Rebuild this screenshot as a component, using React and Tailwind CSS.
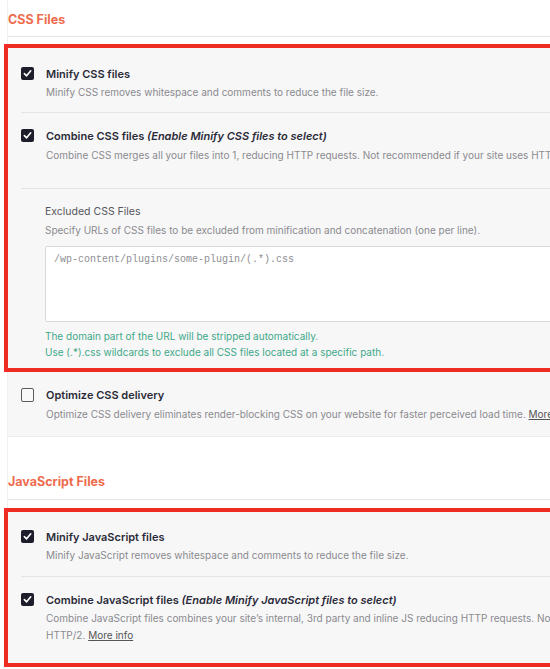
import React from "react";

const font = { fontFamily: "Inter, 'Noto Sans', sans-serif" };

function CheckBox({ checked }) {
  if (checked) {
    return (
      <div className="w-[13px] h-[13px] shrink-0 rounded-[2px] bg-[#1d1d2c] flex items-center justify-center">
        <svg width="9" height="9" viewBox="0 0 10 10" fill="none">
          <path d="M1.5 5.2 L4 7.6 L8.6 2" stroke="white" strokeWidth="1.8" strokeLinecap="round" strokeLinejoin="round" />
        </svg>
      </div>
    );
  }
  return <div className="w-[13px] h-[14px] shrink-0 rounded-[2px] border-[1.5px] border-[#5a5a60] bg-[#f9f9f9]" />;
}

function Row({ checked, title, hint, children, className }) {
  return (
    <div className={"flex gap-[12px] pl-[13px] " + className}>
      <CheckBox checked={checked} />
      <div className="w-[660px]">
        <div className="text-[11px] leading-[14px] font-semibold text-[#2b2b38]">
          {title}
          {hint && <i className="font-semibold"> {hint}</i>}
        </div>
        {children}
      </div>
    </div>
  );
}

function Divider() {
  return <div className="ml-[13px] h-px bg-[#e4e4e6]" />;
}

export default function App() {
  return (
    <div className="w-[550px] h-[669px] overflow-hidden bg-white" style={font}>
      <div className="w-[760px] ml-[7px] border-l border-[#efefef]">
        <div className="h-[37px] flex items-end pb-[8px] border-b border-[#e6e6e6] text-[12.5px] leading-[16px] font-bold text-[#ee6c4e]">
          CSS Files
        </div>
        <div className="mt-[7px] -ml-[4px] border-4 border-[#ee2c24] bg-[#f7f7f8]">
          <Row checked title="Minify CSS files" className="pt-[19px] pb-[11px]">
            <div className="mt-[3px] text-[10px] leading-[17px] text-[#8a8a8e]">
              Minify CSS removes whitespace and comments to reduce the file size.
            </div>
          </Row>
          <Divider />
          <Row checked title="Combine CSS files" hint="(Enable Minify CSS files to select)" className="pt-[16px] pb-[24px]">
            <div className="mt-[4px] text-[10px] leading-[17px] text-[#8a8a8e]">
              Combine CSS merges all your files into 1, reducing HTTP requests. Not recommended if your site uses HTTP/2. <span className="underline text-[#555]">More info</span>
            </div>
          </Row>
          <Divider />
          <div className="pl-[37px] pt-[16px] pb-[8px]">
            <div className="text-[10.5px] leading-[14px] text-[#56565c]">Excluded CSS Files</div>
            <div className="mt-[4px] text-[10px] leading-[14px] text-[#8a8a8e]">
              Specify URLs of CSS files to be excluded from minification and concatenation (one per line).
            </div>
            <textarea
              readOnly
              placeholder="/wp-content/plugins/some-plugin/(.*).css"
              className="mt-[9px] block w-[700px] h-[76px] resize-none rounded-[2px] border border-[#d9d9dd] bg-white px-[8px] py-[6px] text-[10px] leading-[14px] outline-none placeholder:text-[#8e8e94]"
              style={{ fontFamily: "'Liberation Mono', monospace" }}
            />
            <div className="mt-[6px] text-[10px] leading-[16px] text-[#3ea888]">
              <div>The domain part of the URL will be stripped automatically.</div>
              <div>Use (.*).css wildcards to exclude all CSS files located at a specific path.</div>
            </div>
          </div>
        </div>
        <div className="bg-[#f7f7f8] border-b border-[#ececee]">
          <Row title="Optimize CSS delivery" className="pt-[16px] pb-[13px]">
            <div className="mt-[4px] text-[10px] leading-[17px] text-[#8a8a8e]">
              Optimize CSS delivery eliminates render-blocking CSS on your website for faster perceived load time. <span className="underline text-[#555]">More info</span>
            </div>
          </Row>
        </div>
        <div className="h-[63px] flex items-end pb-[9px] border-b border-[#e6e6e6] text-[12.5px] leading-[16px] font-bold text-[#ee6c4e]">
          JavaScript Files
        </div>
        <div className="mt-[8px] -ml-[4px] border-4 border-[#ee2c24] bg-[#f7f7f8]">
          <Row checked title="Minify JavaScript files" className="pt-[18px] pb-[12px]">
            <div className="mt-[3px] text-[10px] leading-[17px] text-[#8a8a8e]">
              Minify JavaScript removes whitespace and comments to reduce the file size.
            </div>
          </Row>
          <Divider />
          <Row checked title="Combine JavaScript files" hint="(Enable Minify JavaScript files to select)" className="pt-[16px] pb-[19px]">
            <div className="mt-[3px] text-[10px] leading-[17px] text-[#8a8a8e]">
              Combine JavaScript files combines your site’s internal, 3rd party and inline JS reducing HTTP requests. Not recommended if your site uses HTTP/2. <span className="underline text-[#555]">More info</span>
            </div>
          </Row>
        </div>
      </div>
    </div>
  );
}
